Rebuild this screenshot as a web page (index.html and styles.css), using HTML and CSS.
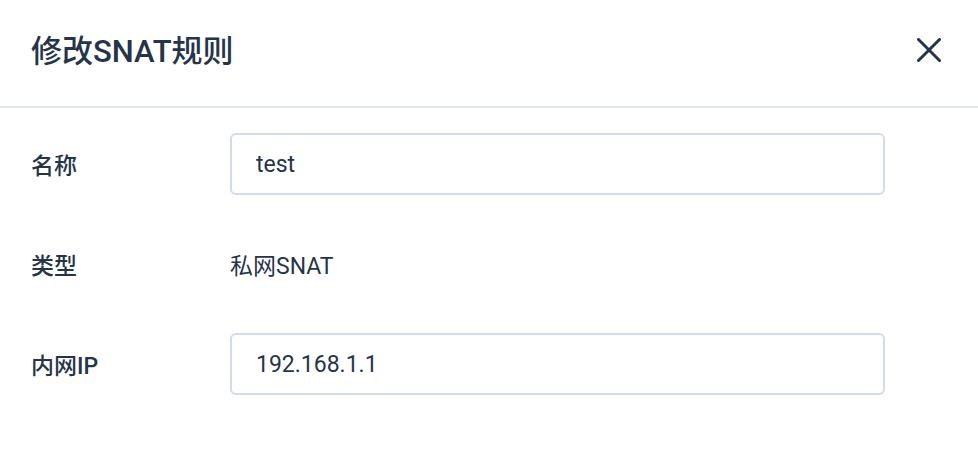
FILE: index.html
```html
<!DOCTYPE html>
<html lang="zh-CN">
<head>
<meta charset="utf-8">
<title>修改SNAT规则</title>
<link rel="stylesheet" href="styles.css">
</head>
<body>
<div class="dialog">
  <header class="dialog-header">
    <h1 class="dialog-title">修改SNAT规则</h1>
    <button class="close-btn" aria-label="关闭">
      <svg width="24" height="24" viewBox="0 0 24 24"><path d="M1.5 1.5 L22.5 22.5 M22.5 1.5 L1.5 22.5" stroke="#26344a" stroke-width="3" stroke-linecap="round" fill="none"/></svg>
    </button>
  </header>
  <form class="form">
    <label class="form-label">名称</label>
    <div class="form-field"><input class="text-input" type="text" value="test"></div>
    <label class="form-label">类型</label>
    <div class="form-field"><span class="form-value">私网SNAT</span></div>
    <label class="form-label">内网IP</label>
    <div class="form-field"><input class="text-input" type="text" value="192.168.1.1"></div>
  </form>
</div>
</body>
</html>
```

FILE: styles.css
```css
html, body {
  margin: 0;
  padding: 0;
  background: #ffffff;
}
body {
  font-family: Roboto, "Noto Sans CJK SC", sans-serif;
  color: #26344a;
}
.dialog {
  width: 978px;
}
.dialog-header {
  height: 106px;
  border-bottom: 2px solid #dfe6ee;
  display: flex;
  align-items: center;
  justify-content: space-between;
  padding: 0 37px 0 31px;
  box-sizing: content-box;
  width: calc(978px - 68px);
}
.dialog-title {
  margin: 0;
  font-size: 31px;
  font-weight: 500;
  color: #26344a;
  font-family: Roboto, "Noto Sans CJK SC", sans-serif;
  letter-spacing: 0;
  position: relative;
  top: -5px;
}
.close-btn {
  border: none;
  background: none;
  padding: 0;
  width: 24px;
  height: 24px;
  display: flex;
  cursor: pointer;
  position: relative;
  top: -3px;
}
.form {
  display: grid;
  grid-template-columns: 199px 655px;
  grid-auto-rows: 62px;
  row-gap: 38px;
  padding: 25px 0 0 31px;
  margin: 0;
}
.form-label {
  display: flex;
  align-items: center;
  font-size: 23px;
  font-weight: 500;
  font-family: Roboto, "Noto Sans CJK SC", sans-serif;
  color: #26344a;
}
.form-field {
  display: flex;
  align-items: center;
}
.form-value {
  font-size: 23px;
  font-family: Roboto, "Noto Sans CJK SC", sans-serif;
  color: #26344a;
}
.text-input {
  width: 100%;
  height: 62px;
  box-sizing: border-box;
  border: 2px solid #d3dce6;
  border-radius: 6px;
  padding: 0 24px;
  font-family: Roboto, "Noto Sans CJK SC", sans-serif;
  font-size: 23px;
  color: #26344a;
  background: #fff;
  outline: none;
}
```
